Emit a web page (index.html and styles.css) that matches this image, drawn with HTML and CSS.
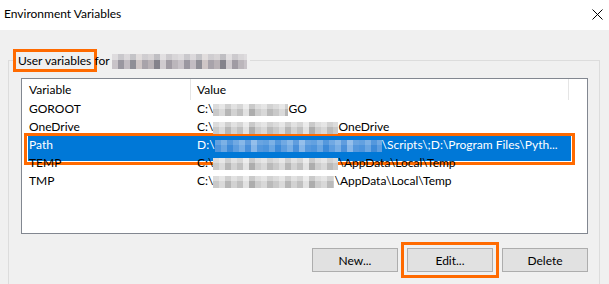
FILE: index.html
```html
<!DOCTYPE html>
<html lang="en">
<head>
<meta charset="utf-8">
<title>Environment Variables</title>
<link rel="stylesheet" href="styles.css">
</head>
<body>
<div class="window">
  <div class="titlebar">
    <span class="title">Environment Variables</span>
    <svg class="close" width="11" height="11" viewBox="0 0 11 11" aria-label="Close">
      <path d="M0.5 0.5 L10.5 10.5 M10.5 0.5 L0.5 10.5" stroke="#000" stroke-width="1" fill="none"/>
    </svg>
  </div>
  <div class="body">
    <fieldset class="group">
      <legend class="group-label"><span class="hl-label">User variables&nbsp;</span>for <span class="blur blur-user"></span></legend>
      <div class="list">
        <div class="list-head">
          <div class="hcol hcol-var">Variable</div>
          <div class="hcol hcol-val">Value</div>
        </div>
        <div class="row">
          <div class="cell cell-var">GOROOT</div>
          <div class="cell cell-val">C:\<span class="blur w-go"></span>GO</div>
        </div>
        <div class="row">
          <div class="cell cell-var">OneDrive</div>
          <div class="cell cell-val">C:\<span class="blur w-od"></span>OneDrive</div>
        </div>
        <div class="row selected">
          <div class="cell cell-var">Path</div>
          <div class="cell cell-val">D:\<span class="blur blur-sel w-path"></span>\Scripts\;D:\Program Files\Pyth...</div>
        </div>
        <div class="row">
          <div class="cell cell-var">TEMP</div>
          <div class="cell cell-val">C:\<span class="blur w-temp"></span>\AppData\Local\Temp</div>
        </div>
        <div class="row">
          <div class="cell cell-var">TMP</div>
          <div class="cell cell-val">C:\<span class="blur w-tmp"></span>\AppData\Local\Temp</div>
        </div>
      </div>
      <div class="buttons">
        <button class="btn">New...</button>
        <button class="btn hl-btn">Edit...</button>
        <button class="btn">Delete</button>
      </div>
    </fieldset>
  </div>
</div>
</body>
</html>
```

FILE: styles.css
```css
* { box-sizing: border-box; }

html, body {
  margin: 0;
  padding: 0;
}

body {
  width: 609px;
  height: 284px;
  overflow: hidden;
  background: #f0f0f0;
  font-family: Lato, "Liberation Sans", sans-serif;
  font-size: 12px;
  color: #000;
}

.window {
  width: 609px;
  height: 284px;
  display: flex;
  flex-direction: column;
}

.titlebar {
  height: 30px;
  flex: none;
  background: #fff;
  display: flex;
  justify-content: space-between;
  align-items: flex-start;
  padding: 6px 6px 0 4px;
}

.title {
  line-height: 16px;
}

.close {
  margin-top: 3px;
  display: block;
}

.body {
  flex: 1;
  overflow: hidden;
}

.group {
  margin: 22px 9px 0 8px;
  padding: 9px 11px 40px 12px;
  border: 1px solid #dcdcdc;
  min-width: 0;
}

.group-label {
  margin-left: -7px;
  padding: 0 3px 0 4px;
  line-height: 16px;
  white-space: nowrap;
}

.hl-label {
  display: inline-block;
  padding: 0 0 0 2px;
  margin-left: -2px;
  outline: 3px solid #ff6a00;
  outline-offset: 0;
  line-height: 17px;
}

.blur {
  display: inline-block;
  height: 12px;
  vertical-align: -3px;
  background:
    linear-gradient(to bottom, rgba(255,255,255,0.35) 0 45%, rgba(0,0,0,0) 45% 100%),
    repeating-linear-gradient(90deg,
      #c9c9c9 0 6px, #dadada 6px 12px, #b6b6b6 12px 18px, #d2d2d2 18px 24px,
      #c0c0c0 24px 30px, #e2e2e2 30px 36px, #adadad 36px 42px, #cccccc 42px 48px,
      #d8d8d8 48px 54px, #bababa 54px 60px);
}

.blur-user {
  width: 135px;
  height: 15px;
  vertical-align: -4px;
  background:
    linear-gradient(to bottom, rgba(240,240,240,0.55) 0 40%, rgba(0,0,0,0) 40% 100%),
    repeating-linear-gradient(90deg,
      #c8c3c8 0 6px, #9a97a0 6px 12px, #c2bcc2 12px 18px, #8f8e96 18px 24px,
      #cfc6c6 24px 30px, #a8a3aa 30px 36px, #b9b2b6 36px 42px, #84828b 42px 48px,
      #d0cbcf 48px 54px, #a09ba3 54px 60px, #bbb6bb 60px 66px);
}

.blur-sel {
  background:
    linear-gradient(to bottom, rgba(255,255,255,0.12) 0 45%, rgba(0,0,0,0) 45% 100%),
    repeating-linear-gradient(90deg,
      #4d94dc 0 6px, #6aa6e2 6px 12px, #3d8ad8 12px 18px, #5d9ddf 18px 24px,
      #78aee5 24px 30px, #4a90da 30px 36px, #86b6e8 36px 42px, #5598dd 42px 48px);
}

.w-go { width: 75px; }
.w-od { width: 125px; }
.w-path { width: 167px; }
.w-temp { width: 125px; }
.w-tmp { width: 121px; }

.list {
  position: relative;
  z-index: 0;
  height: 156px;
  background: #fff;
  border: 1px solid #828790;
}

.list-head {
  display: flex;
  height: 21px;
}

.hcol {
  line-height: 21px;
  padding-left: 7px;
  border-right: 1px solid #e5e5e5;
}

.hcol-var { width: 169px; }
.hcol-val { width: 378px; padding-left: 6px; }

.row {
  display: flex;
  height: 18px;
  line-height: 18px;
  position: relative;
  white-space: nowrap;
}

.cell {
  overflow: hidden;
}

.cell-var {
  width: 168px;
  padding-left: 7px;
}

.cell-val {
  width: 376px;
  padding-left: 7px;
}

.row.selected {
  color: #fff;
}

.row.selected::before {
  content: "";
  position: absolute;
  z-index: -1;
  left: 2px;
  top: -3px;
  width: 543px;
  height: 25px;
  border: 3px solid #ff6a00;
  padding: 0 1px 1px 1px;
  background: #0078d7;
  background-clip: content-box;
}

.buttons {
  display: flex;
  justify-content: flex-end;
  gap: 9px;
  margin-top: 14px;
}

.btn {
  width: 86px;
  height: 24px;
  margin: 0;
  padding: 0;
  background: #e1e1e1;
  border: 1px solid #adadad;
  font-family: inherit;
  font-size: 12px;
  color: #000;
}

.hl-btn {
  outline: 3px solid #ff6a00;
  outline-offset: 3px;
}
```
